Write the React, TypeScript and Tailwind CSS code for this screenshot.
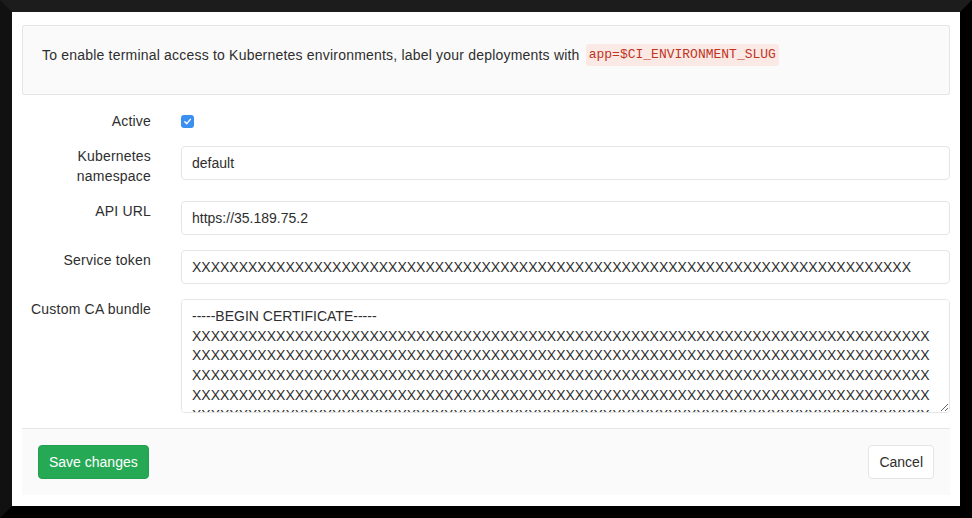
const font = { fontFamily: '"Liberation Sans", Arial, sans-serif' };

const CheckIcon = () => (
  <span className="flex w-[13px] h-[13px] rounded-[3px] bg-[#3b8ff0] items-center justify-center">
    <svg width="9" height="9" viewBox="0 0 10 10" fill="none">
      <path d="M2 5.2 L4.2 7.4 L8.2 2.6" stroke="white" strokeWidth="1.6" strokeLinecap="round" strokeLinejoin="round" />
    </svg>
  </span>
);

const Label = ({ children }: { children: React.ReactNode }) => (
  <div className="w-[144px] shrink-0 pr-[15px] text-right leading-5 tracking-[0.2px]">{children}</div>
);

const inputCls =
  "w-full h-[34px] px-[10px] border border-[#e5e5e5] rounded-[4px] bg-white text-[14px] text-[#2e2e2e] outline-none";

const cert = "-----BEGIN CERTIFICATE-----\n" + "X".repeat(480);

export default function App() {
  return (
    <div className="w-[972px] h-[518px] overflow-hidden border-t-[12px] border-t-[#1c1c1c] border-l-[12px] border-l-[#111111] border-r-[12px] border-r-black border-b-[12px] border-b-black">
      <div className="h-full bg-white text-[14px] text-[#2e2e2e] pt-[13px] px-[10px]" style={font}>
        {/* info banner */}
        <div className="h-[70px] bg-[#fafafa] border border-[#e5e5e5] rounded-[2px] flex items-center pl-[19px] pb-[10px]">
          <span className="tracking-[0.2px]">
            To enable terminal access to Kubernetes environments, label your deployments with&nbsp;
          </span>
          <code
            className="ml-[2px] px-[3px] py-[1px] rounded-[3px] bg-[#fbe9e5] text-[#c0341d] text-[13px]"
            style={{ fontFamily: '"Liberation Mono", "DejaVu Sans Mono", monospace' }}
          >
            app=$CI_ENVIRONMENT_SLUG
          </code>
        </div>

        {/* form */}
        <div className="flex flex-col mt-[16px]">
          <div className="flex h-[20px]">
            <Label>Active</Label>
            <div className="flex items-start pl-[15px] pt-[4px]">
              <CheckIcon />
            </div>
          </div>
          <div className="flex mt-[15px]">
            <Label>Kubernetes namespace</Label>
            <div className="flex-1 pl-[15px]">
              <input className={inputCls} defaultValue="default" />
            </div>
          </div>
          <div className="flex mt-[15px]">
            <Label>API URL</Label>
            <div className="flex-1 pl-[15px]">
              <input className={inputCls} defaultValue="https://35.189.75.2" />
            </div>
          </div>
          <div className="flex mt-[15px]">
            <Label>Service token</Label>
            <div className="flex-1 pl-[15px]">
              <input className={inputCls} defaultValue={"X".repeat(77)} />
            </div>
          </div>
          <div className="flex mt-[15px]">
            <Label>Custom CA bundle</Label>
            <div className="flex-1 pl-[15px]">
              <textarea
                className="block w-full h-[114px] px-[10px] pt-[7px] border border-[#e5e5e5] rounded-[4px] bg-white text-[14px] leading-[19.7px] text-[#2e2e2e] outline-none break-all"
                defaultValue={cert}
              />
            </div>
          </div>
        </div>

        {/* footer */}
        <div className="mt-[15px] h-[67px] bg-[#fafafa] border-t border-[#e5e5e5] flex items-center justify-between px-[16px]">
          <button className="h-[34px] px-[10px] rounded-[4px] bg-[#26a955] border border-[#23a04f] text-white">
            Save changes
          </button>
          <button className="h-[34px] px-[10px] rounded-[4px] bg-white border border-[#e5e5e5] text-[#2e2e2e]">
            Cancel
          </button>
        </div>
      </div>
    </div>
  );
}
